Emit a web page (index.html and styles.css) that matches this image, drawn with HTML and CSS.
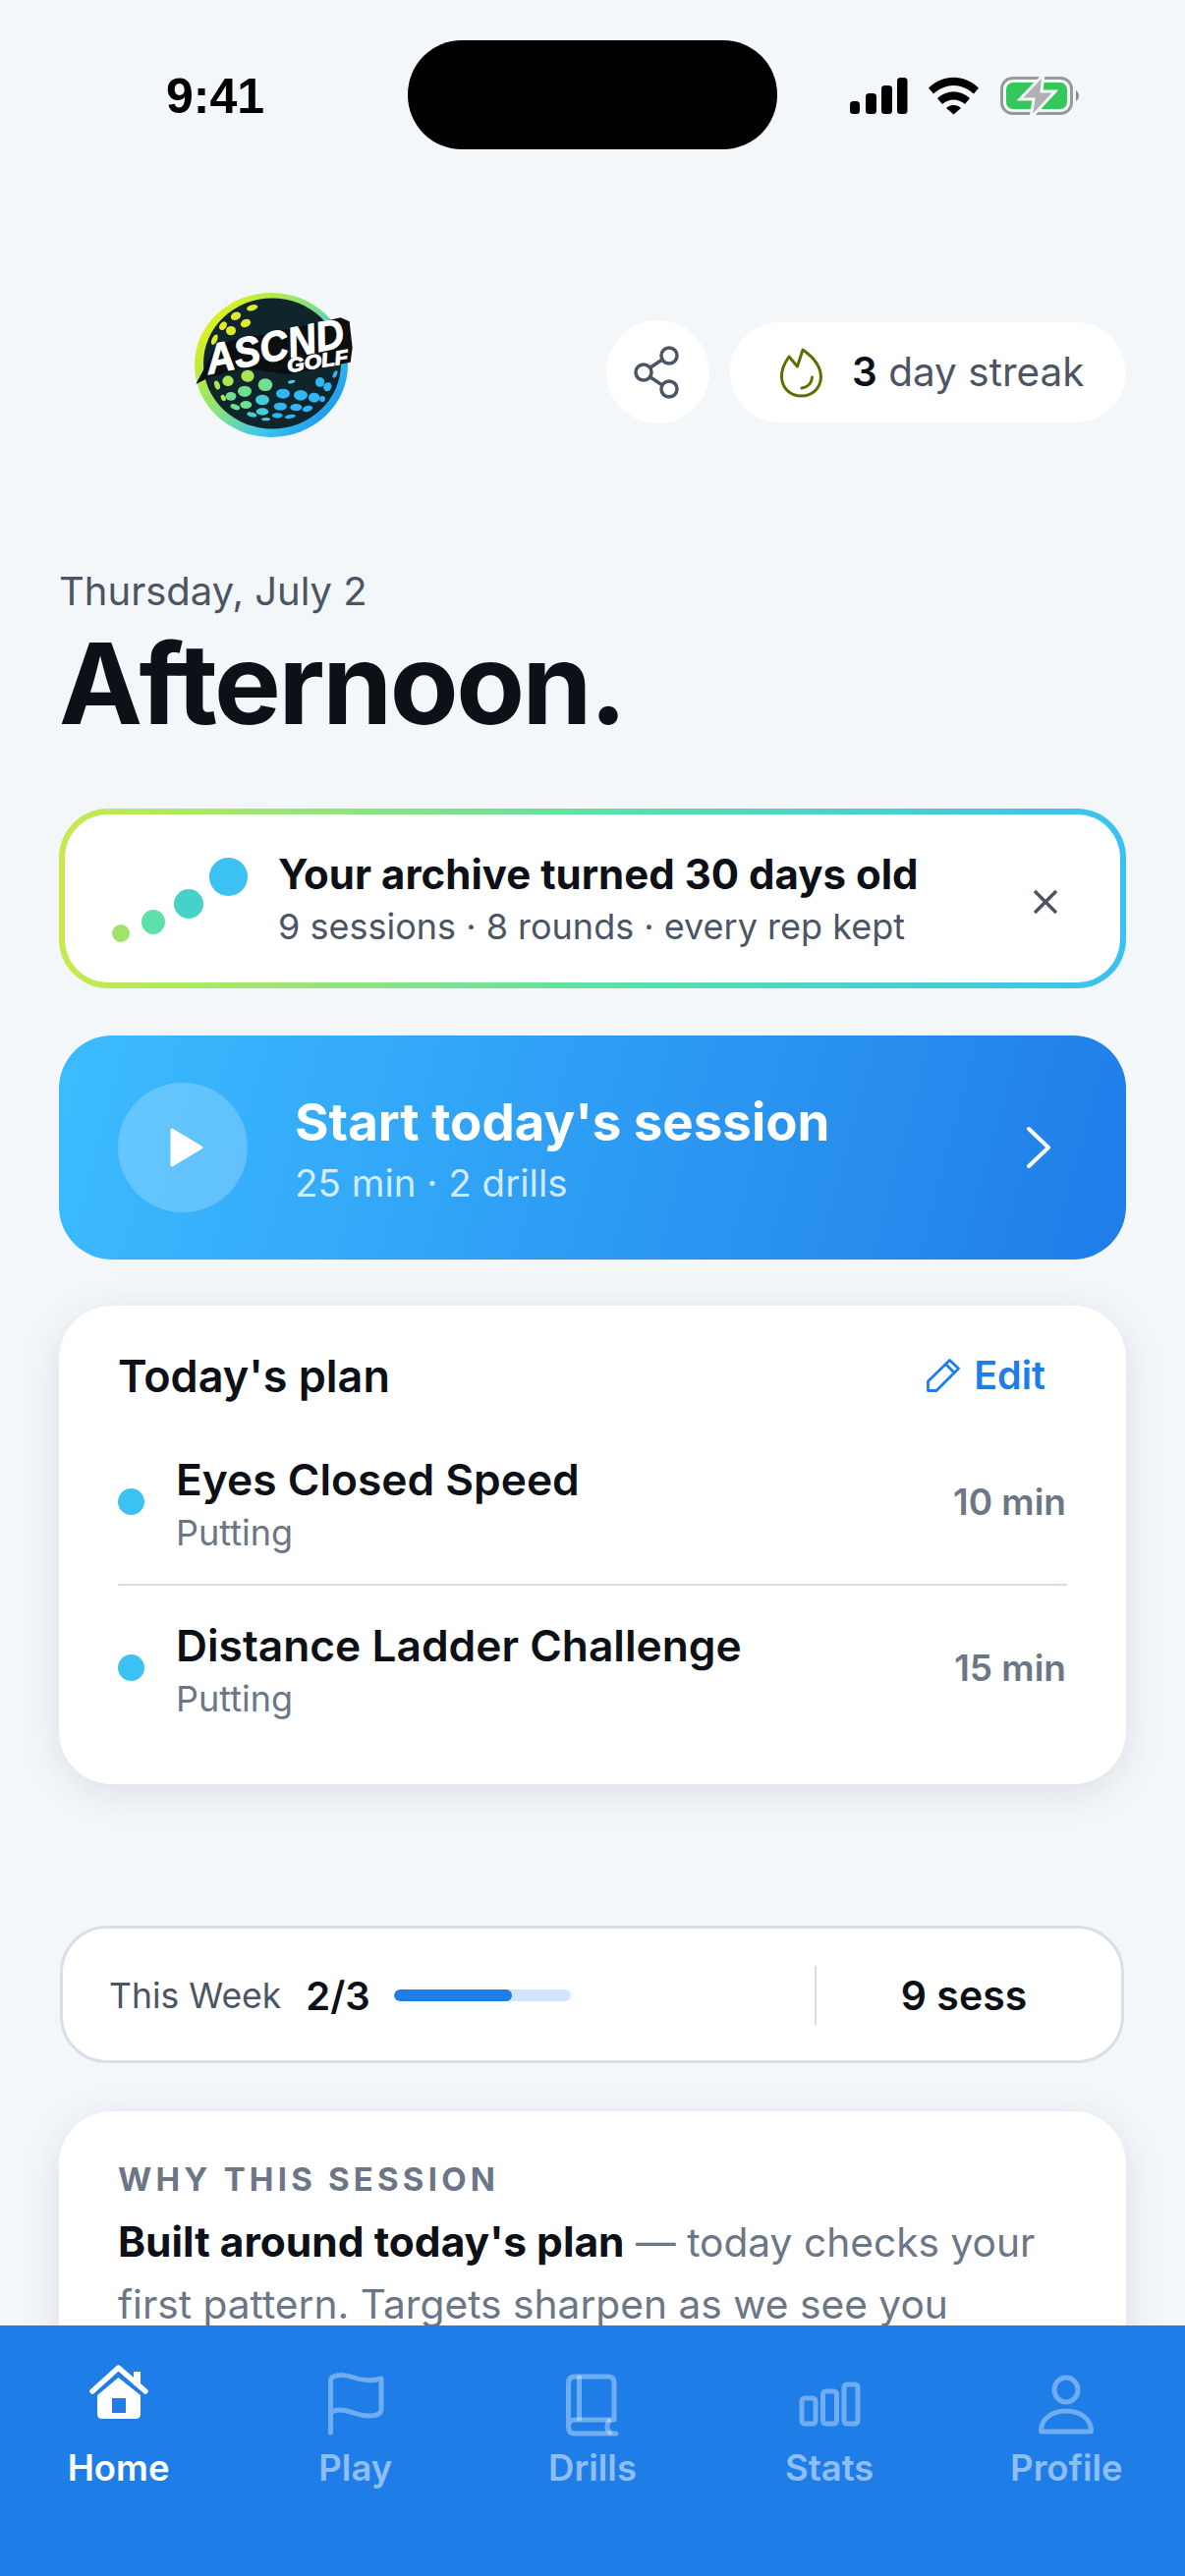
FILE: index.html
```html
<!DOCTYPE html>
<html lang="en">
<head>
    <meta charset="UTF-8">
    <meta name="viewport" content="width=device-width, initial-scale=1.0">
    <title>ASCND Golf - Home</title>
    <link rel="stylesheet" href="styles.css">
</head>
<body>
    <div class="screen">
        <div class="status">
            <span class="time">9:41</span>
            <div class="notch"></div>
            <svg class="status-icons" viewBox="860 74 244 48" width="244" height="48">
                <rect x="865" y="103" width="10" height="13" rx="3.5"/>
                <rect x="881" y="95" width="11" height="21" rx="3.5"/>
                <rect x="897" y="87" width="11" height="29" rx="3.5"/>
                <rect x="913" y="79" width="10.500" height="37" rx="3.5"/>
                <path d="M945 89.500 C960 75 981 75 996 89.500 L991 95.500 C978 84 963 84 950 95.500 Z"/>
                <path d="M954 100 C964 91 977 91 987 100 L982 106 C975 100 966 100 959 106 Z"/>
                <path d="M963 110 C967 106 974 106 978 110 L970.500 116.500 Z"/>
                <rect x="1019.500" y="79.500" width="71" height="36" rx="11" fill="none" stroke="#999" stroke-width="3"/>
                <rect x="1024" y="84" width="62" height="27" rx="7" fill="#34c759"/>
                <path d="M1095 92 C1099 94 1099 101 1095 103 Z" fill="#8e8e8e"/>
                <path d="M1062 76 L1038 101 H1052 L1049 120 L1074 93 H1060 Z" fill="#b0b0b0" stroke="#f4f7fa" stroke-width="3"/>
            </svg>
        </div>

        <div class="content">
            <div class="top-row">
                <svg class="logo" viewBox="170 280 200 180" width="200" height="180">
                    <defs>
                        <linearGradient id="ring" x1="0" y1="0.1" x2="1" y2="0.9">
                            <stop offset="0" stop-color="#f6f500"/>
                            <stop offset="0.45" stop-color="#86e27e"/>
                            <stop offset="0.7" stop-color="#3cc4f0"/>
                            <stop offset="1" stop-color="#0f86f0"/>
                        </linearGradient>
                    </defs>
                    <ellipse cx="276" cy="371.500" rx="78" ry="73.500" fill="url(#ring)"/>
                    <ellipse cx="277" cy="370" rx="70" ry="66.500" fill="#10252b"/>
                    <g transform="translate(170 280) scale(0.3333)">
                        <g fill="#dfe92f">
                            <ellipse cx="260" cy="100" rx="17" ry="9" transform="rotate(-15 260 100)"/>
                            <ellipse cx="210" cy="125" rx="16" ry="12" transform="rotate(-25 210 125)"/>
                            <ellipse cx="240" cy="147" rx="16" ry="12" transform="rotate(-25 240 147)"/>
                            <ellipse cx="171" cy="155" rx="10" ry="14" transform="rotate(35 171 155)"/>
                            <ellipse cx="195" cy="170" rx="15" ry="14"/>
                            <ellipse cx="145" cy="197" rx="8" ry="17" transform="rotate(25 145 197)"/>
                        </g>
                        <g fill="#a9e650">
                            <ellipse cx="153" cy="336" rx="8" ry="14" transform="rotate(-20 153 336)"/>
                            <ellipse cx="186" cy="323" rx="17" ry="16"/>
                            <ellipse cx="246" cy="308" rx="20" ry="18"/>
                            <ellipse cx="172" cy="375" rx="7" ry="10" transform="rotate(-30 172 375)"/>
                        </g>
                        <g fill="#6fdf90">
                            <ellipse cx="195" cy="370" rx="16" ry="13"/>
                            <ellipse cx="237" cy="355" rx="21" ry="17"/>
                            <ellipse cx="300" cy="335" rx="22" ry="19"/>
                            <ellipse cx="208" cy="403" rx="15" ry="8" transform="rotate(20 208 403)"/>
                            <ellipse cx="241" cy="396" rx="18" ry="12"/>
                        </g>
                        <g fill="#44cfd8">
                            <ellipse cx="380" cy="326" rx="11" ry="5" transform="rotate(-15 380 326)"/>
                            <ellipse cx="291" cy="381" rx="21" ry="16"/>
                            <ellipse cx="259" cy="426" rx="15" ry="7" transform="rotate(15 259 426)"/>
                            <ellipse cx="291" cy="417" rx="19" ry="11"/>
                            <ellipse cx="302" cy="440" rx="13" ry="5"/>
                        </g>
                        <g fill="#2fb6f4">
                            <ellipse cx="354" cy="362" rx="21" ry="15"/>
                            <ellipse cx="408" cy="367" rx="21" ry="16"/>
                            <ellipse cx="467" cy="327" rx="14" ry="15"/>
                            <ellipse cx="490" cy="341" rx="12" ry="14" transform="rotate(30 490 341)"/>
                            <ellipse cx="513" cy="303" rx="6" ry="12" transform="rotate(25 513 303)"/>
                            <ellipse cx="449" cy="374" rx="17" ry="15"/>
                            <ellipse cx="474" cy="378" rx="9" ry="9"/>
                            <ellipse cx="337" cy="429" rx="16" ry="8"/>
                            <ellipse cx="394" cy="404" rx="18" ry="11"/>
                            <ellipse cx="346" cy="401" rx="20" ry="12"/>
                            <ellipse cx="429" cy="408" rx="16" ry="9" transform="rotate(-15 429 408)"/>
                            <ellipse cx="376" cy="432" rx="16" ry="6" transform="rotate(-10 376 432)"/>
                        </g>
                        <path d="M88 333 L145 225 L180 205 L530 130 L557 142 L566 222 L560 266 L370 304 L235 284 L130 312 Z" fill="#0b0f12"/>
                        <text class="logo-word" x="128" y="303" transform="rotate(-11.500 128 303)" textLength="428" lengthAdjust="spacingAndGlyphs">ASCND</text>
                        <text class="logo-golf" x="370" y="298" transform="rotate(-9 370 298)" textLength="188" lengthAdjust="spacingAndGlyphs">GOLF</text>
                    </g>
                </svg>
                <div class="top-actions">
                    <div class="share-btn">
                        <svg viewBox="0 0 60 60" width="60" height="60" fill="none" stroke="#4b5563" stroke-width="3.500">
                            <circle cx="41" cy="13" r="8"/>
                            <circle cx="15" cy="30" r="8"/>
                            <circle cx="41" cy="47" r="8"/>
                            <path d="M22 25 L34 17 M22 35 L34 43"/>
                        </svg>
                    </div>
                    <div class="streak">
                        <svg viewBox="793 351 45 54" width="45" height="54" fill="none" stroke="#5f6e00" stroke-width="3" stroke-linejoin="round" stroke-linecap="round">
                            <path d="M817 355 L811.500 372 L803 362 C798 369 795 376 795.500 383 C796 394 804 402 815.500 402 C827 402 835 394 835.500 383 C835.500 372 827 362 817 355 Z"/>
                            <path d="M816 394 C822 393 826 389 826.500 383"/>
                        </svg>
                        <span class="streak-text"><b>3</b> day streak</span>
                    </div>
                </div>
            </div>

            <div class="date">Thursday, July 2</div>
            <h1>Afternoon.</h1>

            <div class="banner">
                <div class="dots">
                    <i class="dot d1"></i>
                    <i class="dot d2"></i>
                    <i class="dot d3"></i>
                    <i class="dot d4"></i>
                </div>
                <div class="banner-text">
                    <div class="banner-title">Your archive turned 30 days old</div>
                    <div class="banner-sub">9 sessions · 8 rounds · every rep kept</div>
                </div>
                <svg class="close" viewBox="0 0 26 26" width="26" height="26" fill="none" stroke="#4b5563" stroke-width="3.500">
                    <path d="M2 2 L24 24 M24 2 L2 24"/>
                </svg>
            </div>

            <div class="start">
                <div class="play">
                    <svg viewBox="0 0 34 40" width="34" height="40">
                        <path d="M2 2 L32 20 L2 38 Z" fill="#fff" stroke="#fff" stroke-width="3" stroke-linejoin="round"/>
                    </svg>
                </div>
                <div class="start-text">
                    <div class="start-title">Start today's session</div>
                    <div class="start-sub">25 min · 2 drills</div>
                </div>
                <svg class="chevron" viewBox="0 0 26 44" width="26" height="44" fill="none" stroke="#fff" stroke-width="4" stroke-linecap="round" stroke-linejoin="round">
                    <path d="M3 3 L23 22 L3 41"/>
                </svg>
            </div>

            <div class="card plan">
                <div class="plan-head">
                    <span class="plan-title">Today's plan</span>
                    <span class="edit">
                        <svg viewBox="0 0 34 34" width="34" height="34" fill="none" stroke="#1f7de8" stroke-width="2.800" stroke-linejoin="round">
                            <path d="M1.500 23 L23.500 1.500 L32.500 10 L10 32.500 H1.500 Z"/>
                            <path d="M19.500 5.500 L28.500 14.500"/>
                        </svg>
                        Edit
                    </span>
                </div>
                <div class="drill">
                    <i class="drill-dot"></i>
                    <div class="drill-text">
                        <div class="drill-name">Eyes Closed Speed</div>
                        <div class="drill-type">Putting</div>
                    </div>
                    <span class="drill-time">10 min</span>
                </div>
                <div class="drill">
                    <i class="drill-dot"></i>
                    <div class="drill-text">
                        <div class="drill-name">Distance Ladder Challenge</div>
                        <div class="drill-type">Putting</div>
                    </div>
                    <span class="drill-time">15 min</span>
                </div>
            </div>

            <div class="week">
                <span class="week-label">This Week</span>
                <span class="week-count">2/3</span>
                <div class="week-bar"><div class="week-fill" style="width: 67%"></div></div>
                <span class="week-sep"></span>
                <span class="week-sess">9 sess</span>
            </div>

            <div class="card why">
                <div class="why-label">WHY THIS SESSION</div>
                <p><b>Built around today's plan</b> — today checks your first pattern. Targets sharpen as we see you</p>
            </div>
        </div>

        <nav class="tabs">
            <div class="tab active">
                <svg viewBox="85 2404 72 78" width="72" height="78">
                    <path d="M94 2434 L120.500 2410 L148 2434" fill="none" stroke="#fff" stroke-width="5.500" stroke-linecap="round" stroke-linejoin="round"/>
                    <rect x="136" y="2414" width="7" height="14" fill="#fff"/>
                    <path fill-rule="evenodd" d="M99 2438 L120.500 2420 L143 2438 V2457 Q143 2462 138 2462 H104 Q99 2462 99 2457 Z M114 2441 V2456 H128 V2441 Z" fill="#fff"/>
                </svg>
                <span>Home</span>
            </div>
            <div class="tab">
                <svg viewBox="327 2404 72 78" width="72" height="78" class="line-icon">
                    <path d="M337.500 2476 V2423 C337.500 2417 350 2416 361 2420 C372 2424 382 2423 389 2421 V2452 C389 2461 372 2460 361 2456 C350 2452 342 2452 337.500 2456"/>
                </svg>
                <span>Play</span>
            </div>
            <div class="tab">
                <svg viewBox="568 2404 72 78" width="72" height="78" class="line-icon">
                    <path d="M628 2477 H586 C581 2477 579.500 2474 579.500 2470 V2426 C579.500 2421 582 2419 586 2419 H620 C624 2419 626 2421 626 2425 V2463 H586 C581 2463 579.500 2466 579.500 2470"/>
                    <path d="M590.500 2420 V2462"/>
                    <path d="M621 2464 C618 2468 618 2473 622 2476"/>
                </svg>
                <span>Drills</span>
            </div>
            <div class="tab">
                <svg viewBox="809 2404 72 78" width="72" height="78" class="line-icon">
                    <rect x="817" y="2441" width="14" height="26" rx="3"/>
                    <rect x="838.500" y="2434" width="14" height="33" rx="3"/>
                    <rect x="860" y="2427" width="14" height="40" rx="3"/>
                </svg>
                <span>Stats</span>
            </div>
            <div class="tab">
                <svg viewBox="1050 2404 72 78" width="72" height="78" class="line-icon">
                    <ellipse cx="1086" cy="2432.500" rx="12" ry="12.500"/>
                    <path d="M1060.500 2475 C1060 2462 1072 2454 1086 2454 C1100 2454 1112 2462 1111.500 2475 Z"/>
                </svg>
                <span>Profile</span>
            </div>
        </nav>
    </div>
</body>
</html>
```

FILE: styles.css
```css
* {
    box-sizing: border-box;
}
body {
    margin: 0;
    background: #f4f7fa;
    font-family: Inter, "Noto Sans", sans-serif;
    color: #0d1117;
}
.screen {
    width: 1206px;
    height: 2622px;
    display: flex;
    flex-direction: column;
    overflow: hidden;
}

/* status bar */
.status {
    flex: none;
    height: 152px;
    padding: 41px 0 0 169px;
    display: flex;
    align-items: flex-start;
}
.time {
    width: 246px;
    margin-top: 30px;
    font-family: "Liberation Sans", Arial, sans-serif;
    font-weight: 700;
    font-size: 50px;
    line-height: 54px;
    color: #000;
}
.notch {
    width: 376px;
    height: 111px;
    border-radius: 55px;
    background: #000;
}
.status-icons {
    margin: 33px 0 0 69px;
    fill: #000;
}

.content {
    flex: 1;
    min-height: 0;
    overflow: hidden;
    padding: 128px 60px 0;
}

/* logo + streak */
.top-row {
    display: flex;
    justify-content: space-between;
    align-items: flex-start;
    height: 180px;
    margin-left: 110px;
}
.logo-word {
    font-family: "Liberation Sans", Arial, sans-serif;
    font-weight: 700;
    font-style: italic;
    font-size: 128px;
    fill: #fff;
    stroke: #fff;
    stroke-width: 3px;
}
.logo-golf {
    font-family: "Liberation Sans", Arial, sans-serif;
    font-weight: 700;
    font-style: italic;
    font-size: 60px;
    fill: #fff;
    stroke: #fff;
    stroke-width: 3px;
}
.top-actions {
    display: flex;
    align-items: center;
    gap: 21px;
    margin-top: 46px;
}
.share-btn {
    width: 105px;
    height: 105px;
    border-radius: 50%;
    background: #fff;
    display: flex;
    align-items: center;
    justify-content: center;
}
.streak {
    width: 403px;
    height: 102px;
    border-radius: 51px;
    background: #fff;
    display: flex;
    align-items: center;
    gap: 29px;
    padding-left: 50px;
}
.streak-text {
    font-size: 40.500px;
    color: #4b5563;
}
.streak-text b {
    font-weight: 600;
    color: #0d1117;
}

.date {
    margin-top: 118px;
    font-size: 40px;
    line-height: 48px;
    color: #4b5563;
}
h1 {
    margin: 0;
    font-size: 114px;
    font-weight: 700;
    line-height: 140px;
    letter-spacing: -2.500px;
}

/* archive banner */
.banner {
    margin-top: 57px;
    height: 183px;
    border: 6px solid transparent;
    border-radius: 50px;
    background: linear-gradient(#fff, #fff) padding-box, linear-gradient(90deg, #c6ea4e, #5fe0a5 50%, #3bc1f2) border-box;
    display: flex;
    align-items: center;
}
.dots {
    position: relative;
    width: 217px;
    height: 100%;
    flex: none;
}
.dot {
    position: absolute;
    border-radius: 50%;
}
.d1 { left: 48px; top: 112px; width: 18px; height: 18px; background: #9fe36b; }
.d2 { left: 78px; top: 97px; width: 24px; height: 25px; background: #5ee0a8; }
.d3 { left: 111px; top: 76px; width: 30px; height: 30px; background: #46d2c8; }
.d4 { left: 147px; top: 44px; width: 39px; height: 39px; background: #3bc1f2; }
.banner-text {
    flex: 1;
    padding-top: 3px;
}
.banner-title {
    font-size: 42px;
    font-weight: 700;
    line-height: 54px;
}
.banner-sub {
    font-size: 36px;
    line-height: 52px;
    color: #4b5563;
}
.close {
    flex: none;
    margin: 6px 63px 0 0;
}

/* start button */
.start {
    margin-top: 48px;
    height: 228px;
    border-radius: 54px;
    background: linear-gradient(105deg, #3cbcff, #1f7de8);
    display: flex;
    align-items: center;
    padding: 0 76px 0 60px;
    color: #fff;
}
.play {
    width: 132px;
    height: 132px;
    flex: none;
    border-radius: 50%;
    background: rgba(255, 255, 255, 0.22);
    display: flex;
    align-items: center;
    justify-content: center;
    padding-left: 8px;
}
.start-text {
    flex: 1;
    margin-left: 48px;
    padding-top: 3px;
}
.start-title {
    font-size: 52.800px;
    font-weight: 700;
    line-height: 66px;
}
.start-sub {
    margin-top: 3px;
    font-size: 38.500px;
    line-height: 52px;
    color: rgba(255, 255, 255, 0.8);
}

.card {
    background: #fff;
    border-radius: 54px;
    box-shadow: 0 8px 40px rgba(40, 60, 90, 0.12);
}

/* today's plan */
.plan {
    margin-top: 47px;
    height: 487px;
    padding: 42px 60px 0;
}
.plan-head {
    display: flex;
    justify-content: space-between;
    align-items: center;
    height: 58px;
    margin-bottom: 15px;
}
.plan-title {
    font-size: 45px;
    font-weight: 600;
}
.edit {
    display: flex;
    align-items: center;
    gap: 14px;
    padding-right: 22px;
    font-size: 39.500px;
    font-weight: 600;
    color: #1f7de8;
}
.drill {
    display: flex;
    align-items: center;
    height: 168px;
}
.drill + .drill {
    border-top: 2px solid #d5dde6;
}
.drill-dot {
    width: 27px;
    height: 27px;
    border-radius: 50%;
    background: #3bc1f2;
    flex: none;
    margin-right: 32px;
}
.drill-text {
    flex: 1;
    padding-top: 5px;
}
.drill-name {
    font-size: 44.300px;
    font-weight: 600;
    line-height: 58px;
}
.drill-type {
    font-size: 36px;
    line-height: 50px;
    color: #6b7686;
}
.drill-time {
    margin-right: 1px;
    font-size: 37px;
    font-weight: 600;
    color: #6b7686;
}

/* this week strip */
.week {
    margin: 144px 2px 0 1px;
    height: 140px;
    border: 3px solid #d7e0e8;
    border-radius: 48px;
    background: #fff;
    display: flex;
    align-items: center;
    padding: 2px 0 0 47px;
}
.week-label {
    font-size: 35.500px;
    color: #4b5563;
}
.week-count {
    margin-left: 25px;
    font-size: 40px;
    font-weight: 600;
}
.week-bar {
    width: 180px;
    height: 12px;
    margin-left: 24px;
    border-radius: 6px;
    background: #d2e5fb;
    overflow: hidden;
}
.week-fill {
    height: 100%;
    border-radius: 6px;
    background: #1f7de8;
}
.week-sep {
    width: 2px;
    height: 60px;
    margin-left: auto;
    background: #d5dde6;
}
.week-sess {
    width: 310px;
    padding-right: 10px;
    text-align: center;
    font-size: 41px;
    font-weight: 600;
}

/* why this session */
.why {
    margin-top: 49px;
    padding: 45px 60px 60px;
}
.why-label {
    font-size: 33px;
    font-weight: 700;
    line-height: 48px;
    letter-spacing: 4.200px;
    color: #6b7686;
}
.why p {
    margin: 8px 0 0;
    font-size: 40.700px;
    line-height: 63px;
    color: #6b7686;
}
.why b {
    font-size: 42.500px;
    font-weight: 700;
    color: #0d1117;
}

/* bottom tabs */
.tabs {
    flex: none;
    height: 255px;
    background: #1f7de8;
    display: grid;
    grid-template-columns: repeat(5, 1fr);
    padding-top: 37px;
}
.tab {
    display: flex;
    flex-direction: column;
    align-items: center;
    font-size: 36.500px;
    font-weight: 600;
    line-height: 48px;
    color: rgba(255, 255, 255, 0.5);
}
.tab.active {
    color: #fff;
}
.tab svg {
    margin-bottom: 6px;
}
.line-icon {
    fill: none;
    stroke: rgba(255, 255, 255, 0.36);
    stroke-width: 5;
    stroke-linecap: round;
    stroke-linejoin: round;
}
```
